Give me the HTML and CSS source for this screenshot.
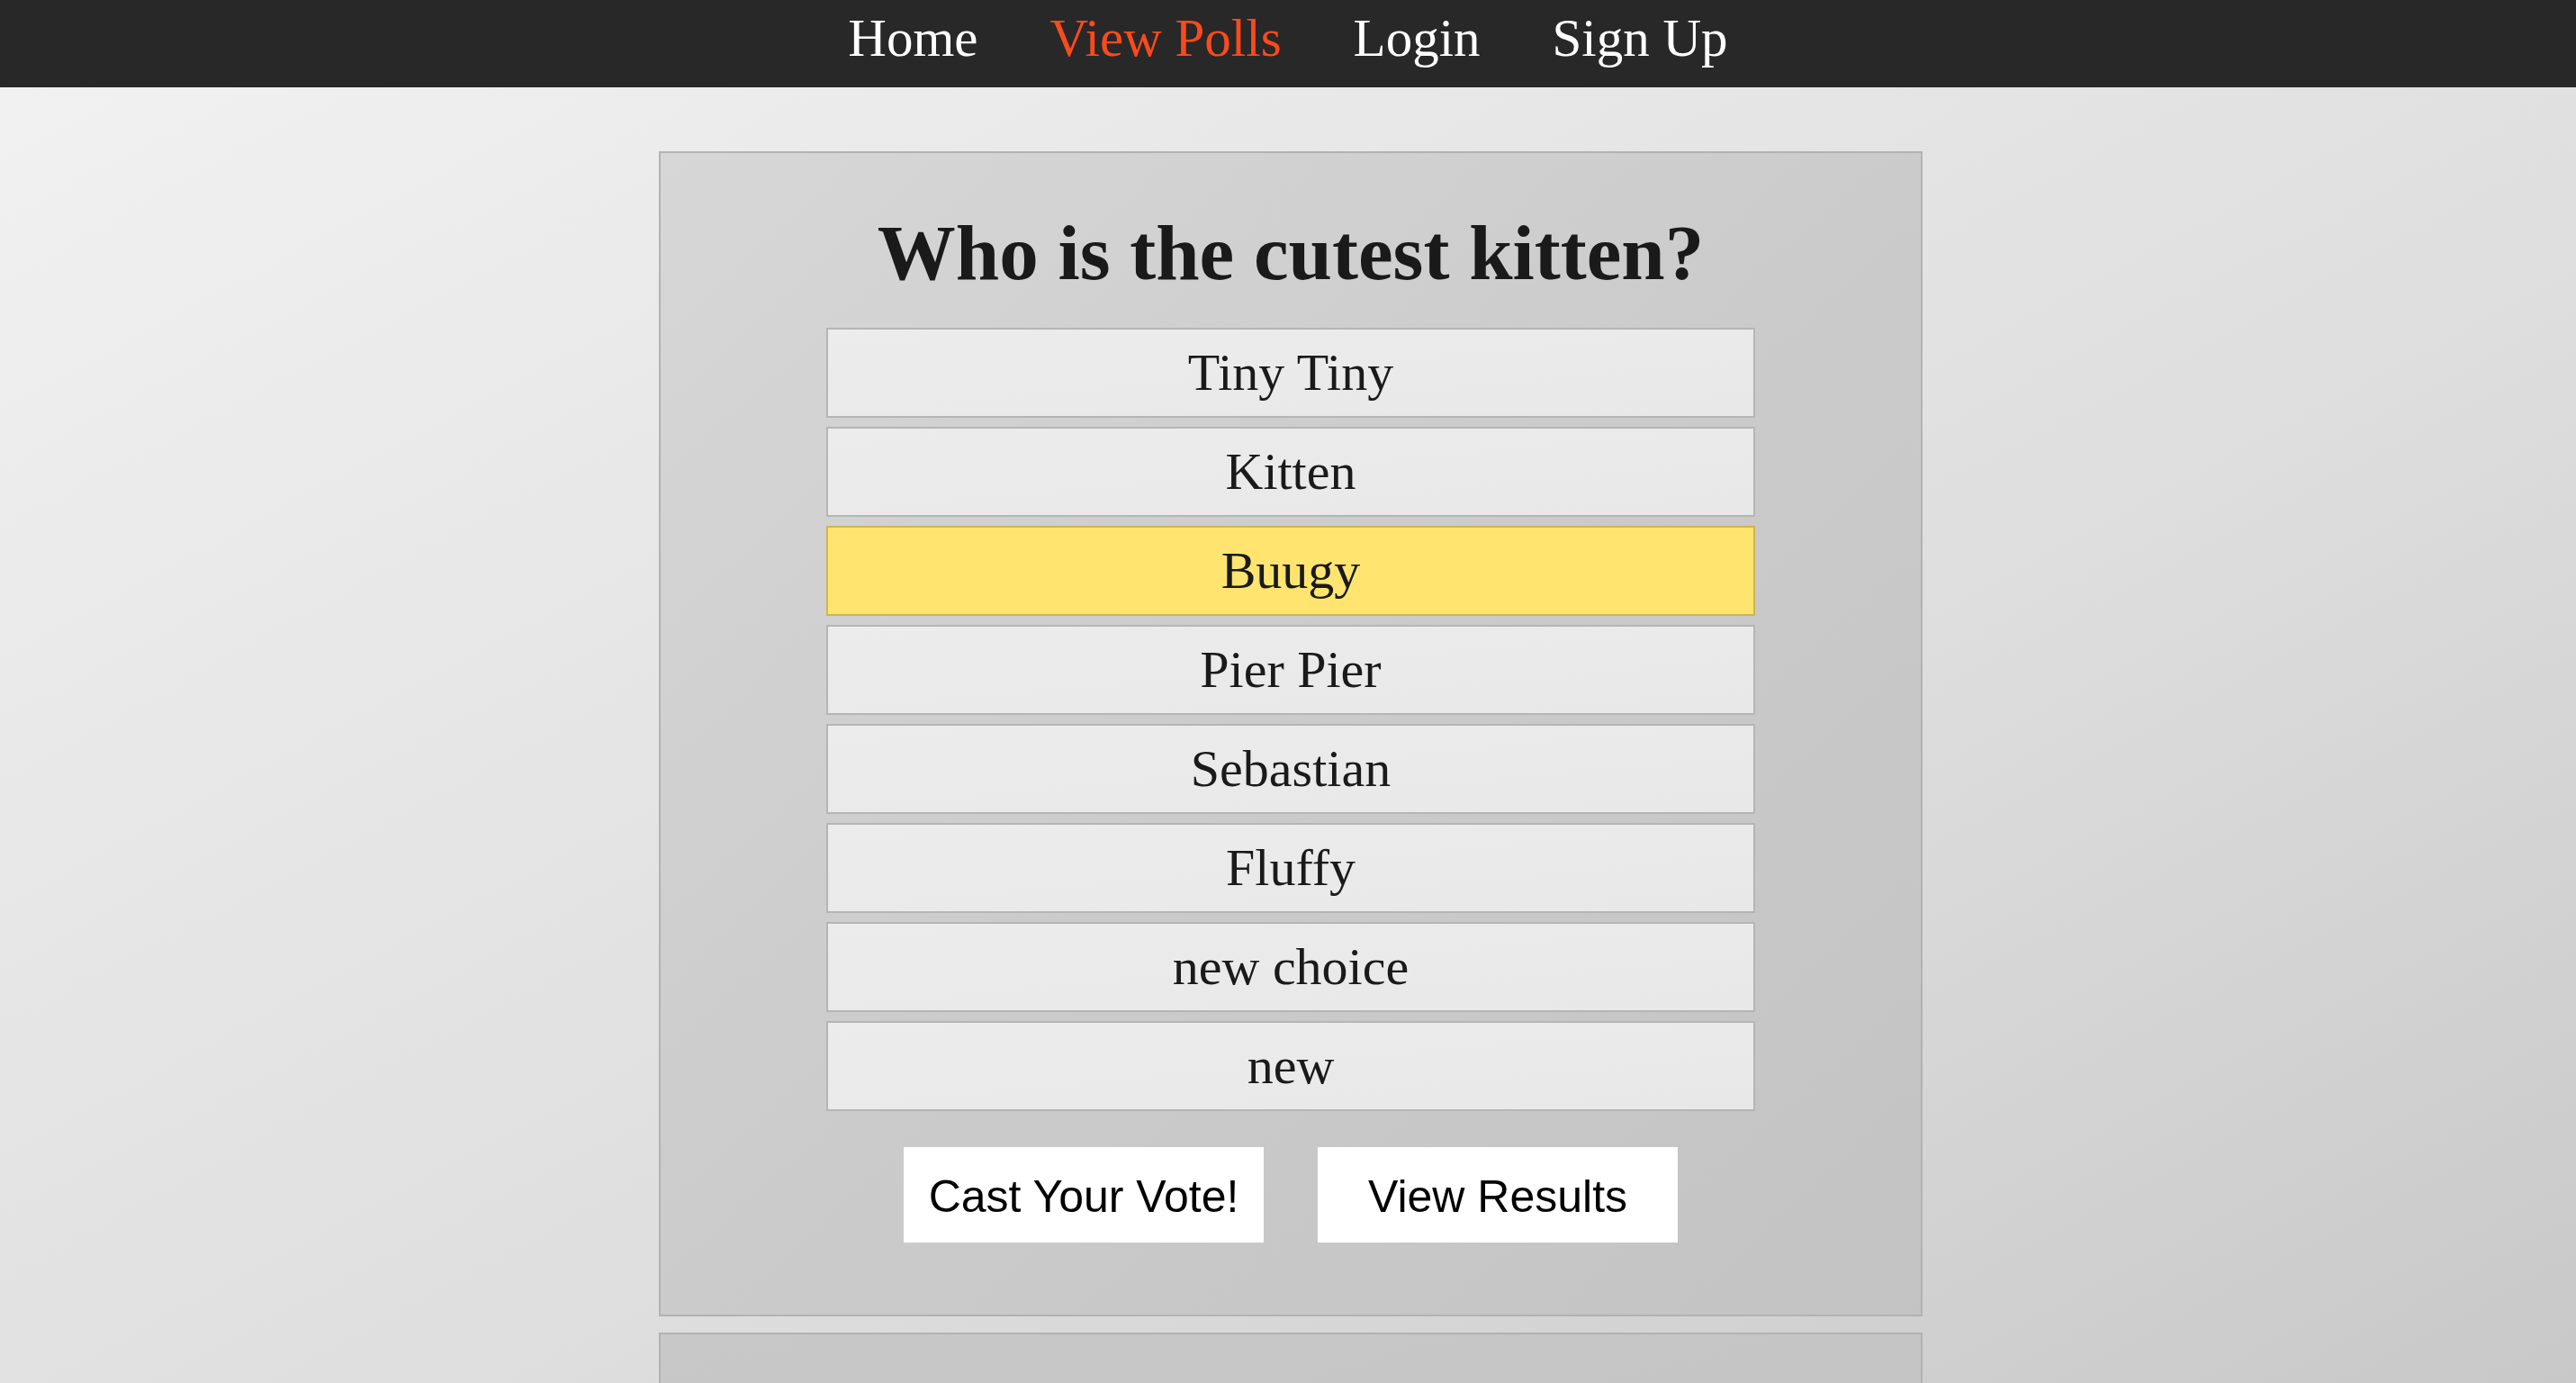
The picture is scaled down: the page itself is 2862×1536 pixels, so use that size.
FILE: index.html
```html
<!DOCTYPE html>
<html lang="en">
<head>
<meta charset="utf-8">
<title>Who is the cutest kitten?</title>
<link rel="stylesheet" href="styles.css">
</head>
<body>
<nav class="topnav">
  <a class="nav-link" href="#">Home</a>
  <a class="nav-link active" href="#">View Polls</a>
  <a class="nav-link" href="#">Login</a>
  <a class="nav-link" href="#">Sign Up</a>
</nav>
<main class="content">
  <section class="card">
    <h1 class="poll-title">Who is the cutest kitten?</h1>
    <ul class="choices">
      <li class="choice">Tiny Tiny</li>
      <li class="choice">Kitten</li>
      <li class="choice selected">Buugy</li>
      <li class="choice">Pier Pier</li>
      <li class="choice">Sebastian</li>
      <li class="choice">Fluffy</li>
      <li class="choice">new choice</li>
      <li class="choice">new</li>
    </ul>
    <div class="actions">
      <button class="btn">Cast Your Vote!</button>
      <button class="btn">View Results</button>
    </div>
  </section>
  <section class="card card-next"></section>
</main>
</body>
</html>
```
FILE: styles.css
```css
html {
  min-height: 100%;
  background: linear-gradient(to bottom right, #f2f2f2 0%, #dedede 60%, #c8c8c8 100%);
}
body {
  margin: 0;
  font-family: "Liberation Serif", "DejaVu Serif", serif;
  color: #1a1a1a;
  height: 1536px;
  overflow: hidden;
}
.topnav {
  height: 97px;
  box-sizing: border-box;
  background: #282828;
  display: flex;
  justify-content: center;
  align-items: flex-start;
  gap: 80px;
  padding-top: 10px;
}
.nav-link {
  font-size: 59px;
  line-height: 65px;
  color: #ffffff;
  text-decoration: none;
}
.nav-link.active {
  color: #fb4a1c;
}
.content {
  padding-top: 71px;
}
.card {
  width: 1400px;
  margin: 0 0 0 calc(50% - 699px);
  border: 2px solid #b2b2b2;
  background: linear-gradient(to bottom right, #d7d7d7 0%, #cbcbcb 50%, #c3c3c3 100%);
  padding: 61px 0 80px;
  display: flex;
  flex-direction: column;
  align-items: center;
}
.card-next {
  margin-top: 18px;
  height: 400px;
  padding: 0;
  background: linear-gradient(to bottom right, #c8c8c8, #c2c2c2);
}
.poll-title {
  margin: 0 0 33px;
  font-size: 87px;
  line-height: 100px;
  font-weight: bold;
  color: #1a1a1a;
}
.choices {
  list-style: none;
  margin: 0;
  padding: 0;
  width: 1032px;
  display: flex;
  flex-direction: column;
  gap: 10px;
}
.choice {
  box-sizing: border-box;
  height: 100px;
  border: 2px solid #b5b5b5;
  background: linear-gradient(to bottom right, #ececec, #e8e8e8);
  text-align: center;
  font-size: 58px;
  line-height: 96px;
  color: #1a1a1a;
}
.choice.selected {
  background: #ffe570;
  border-color: #cdb552;
}
.actions {
  margin-top: 40px;
  display: flex;
  gap: 60px;
}
.btn {
  width: 400px;
  height: 106px;
  border: none;
  background: #ffffff;
  font-family: "Liberation Sans", Arial, sans-serif;
  font-size: 50px;
  color: #000000;
  padding: 4px 0 0;
  line-height: 100px;
}
```
